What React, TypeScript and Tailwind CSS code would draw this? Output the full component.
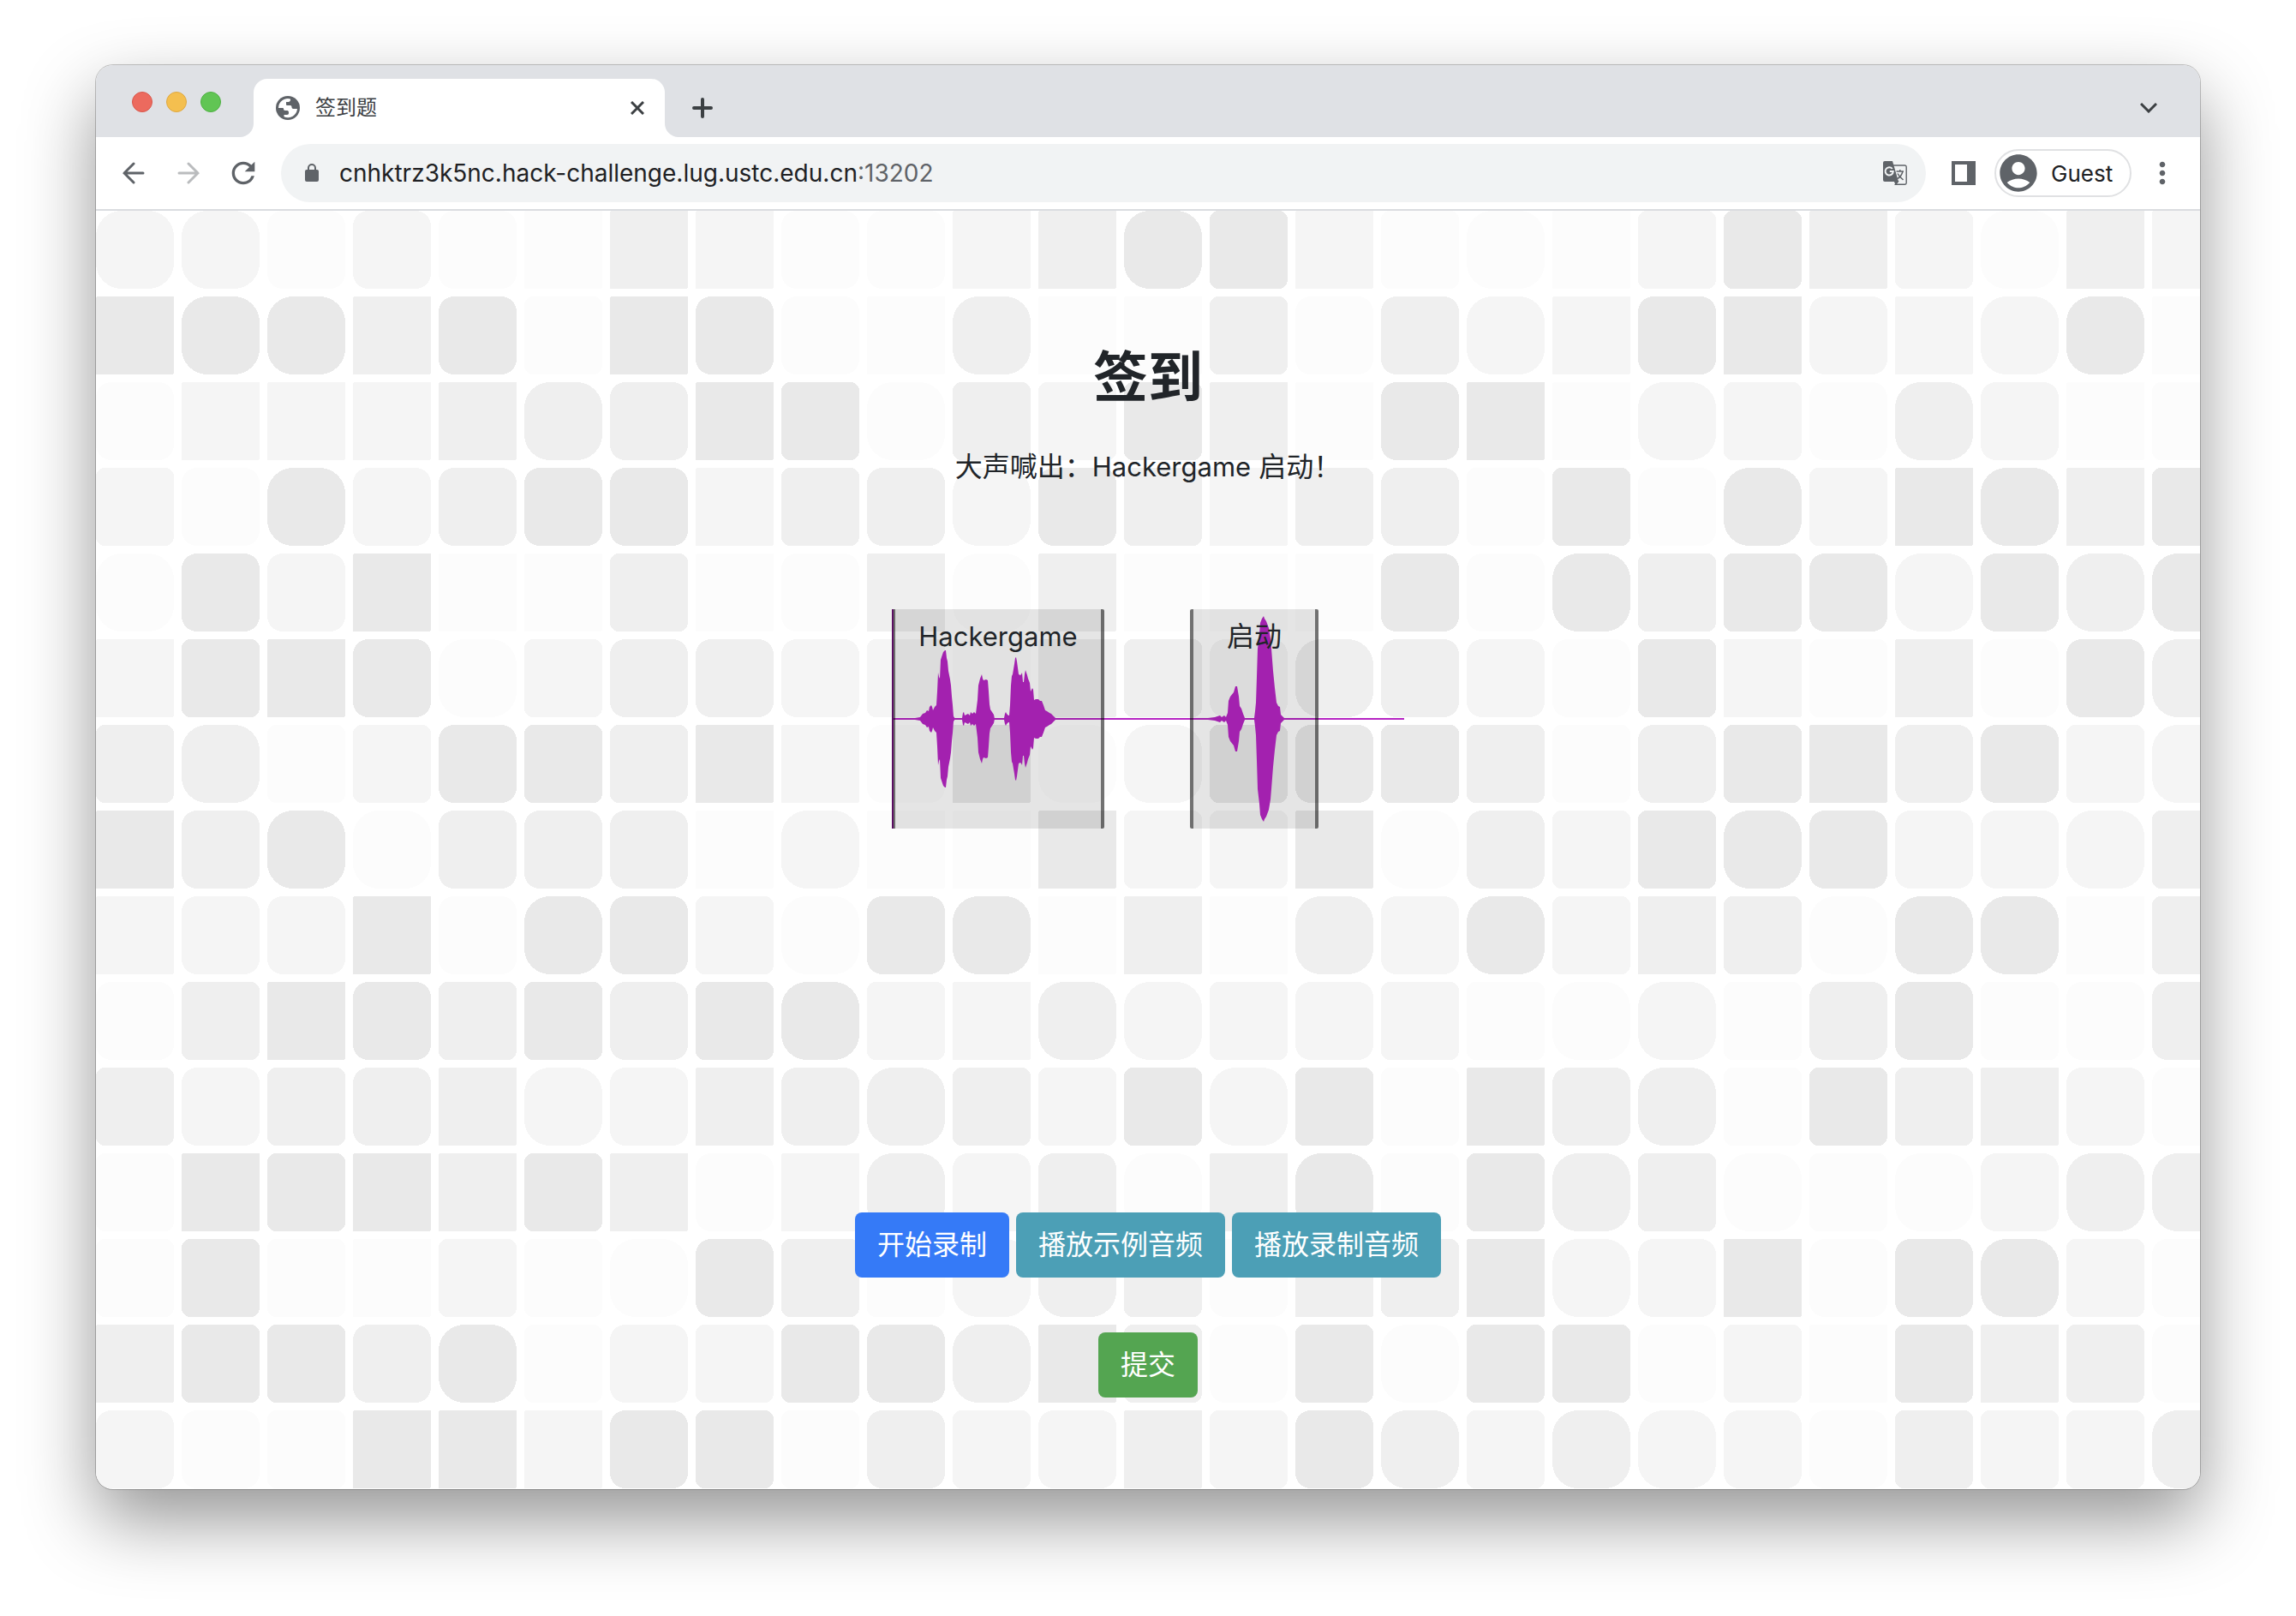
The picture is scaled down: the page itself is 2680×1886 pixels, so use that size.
import { Fragment } from "react";
import { MdAccountCircle, MdMoreVert, MdRefresh } from "react-icons/md";

const TILE_ROWS = [
  "2d 2d 1c 2c 1c 1a 3a 2a 1c 1c 2a 3a 4d 4b 2a 1b 1d 1a 2b 4b 3a 2b 1d 3a 2a",
  "4a 4d 4d 3a 4c 1b 4a 4c 1c 1a 3d 1a 1a 3b 1c 3c 2d 2a 4c 4a 2c 2a 2d 4d 1a",
  "1c 2a 2a 2a 3a 3d 3c 4a 4b 1d 3b 2b 4b 3a 1a 4c 4a 1a 2d 2b 1c 3d 2c 1a 1b",
  "2b 1c 4d 2c 3c 4c 4c 2a 3b 3c 2d 4c 3b 2a 3b 3c 1b 4b 1c 4d 2b 4a 4d 3a 4b",
  "1d 4c 2c 4a 1a 1a 3b 1a 1c 3a 1d 3a 1a 1a 1a 4c 1c 4d 3b 4b 4c 2d 4c 3d 4d",
  "2a 4b 4a 4c 1d 2b 3c 3c 2c 2b 1a 3a 3b 2c 3d 3c 2c 1c 4b 2a 1b 3a 1c 4c 3d",
  "3b 3d 1b 2b 4c 4b 3b 4a 2a 1c 4a 1d 2d 4b 4c 4b 3b 1b 3c 4b 4a 3c 4c 2b 2d",
  "4a 3c 4d 1d 3c 3c 3c 1a 2d 1a 1a 4a 2b 2b 4a 1d 3c 2b 4b 4d 4c 2c 2c 2d 3b",
  "2a 2c 2c 4a 1c 4d 4c 2b 1d 4c 4d 1a 3a 1a 3d 2c 4d 2b 3a 3b 1d 4d 4d 1a 3b",
  "1c 3b 4a 4c 3b 4b 3c 4b 4d 2b 2a 3d 2d 2b 2c 2b 1b 1d 2d 1b 3c 4c 1b 1c 3c",
  "3b 2c 3b 3c 3a 2d 2c 3a 3c 3d 3b 2b 4b 2d 4b 1b 4a 3c 3d 1b 4b 3b 3a 2c 1c",
  "1b 4a 4b 4a 3a 4b 3a 1c 2a 3d 2c 3c 1d 3a 4d 1b 4b 3d 3b 1d 1b 1d 2c 3d 3d",
  "1b 4b 1b 1a 2b 1b 1d 4c 3b 1b 2d 3d 3b 1c 3a 3b 4a 2d 2c 4a 1c 4c 4d 2b 1c",
  "3a 4b 4b 3c 4d 1b 2c 2b 4b 4c 3d 4a 3b 1c 4b 1d 4b 4b 1c 2b 1a 4b 3a 3b 1c",
  "2c 1c 1b 4a 4a 2a 4c 4b 1b 3c 2b 2c 3a 2b 4c 3d 2b 3d 2d 2c 1c 3b 2b 2b 3d",
];

const TILE_FILL: Record<string, string> = { "1": "#fcfcfc", "2": "#f5f5f5", "3": "#efefef", "4": "#e9e9e9" };
const TILE_RADIUS: Record<string, number> = { a: 2, b: 10, c: 18, d: 30 };

function TileBackdrop() {
  return (
    <svg className="absolute inset-0 h-full w-full" aria-hidden="true" shapeRendering="crispEdges">
      {TILE_ROWS.map((row, y) => (
        <Fragment key={y}>
          {row.split(" ").map((tile, x) => (
            <rect
              key={x}
              x={x * 100}
              y={y * 100}
              width={91}
              height={91}
              rx={TILE_RADIUS[tile[1]]}
              fill={TILE_FILL[tile[0]]}
            />
          ))}
        </Fragment>
      ))}
    </svg>
  );
}

/* Envelope of each burst: x position and amplitude, mirrored round the axis. */
const BURSTS: [number, number][][] = [
  [
    [28, 1], [34, 2], [37, 6], [40, 7], [42, 10], [44, 9], [45, 14], [47, 16], [48, 14], [49, 10], [51, 14], [53, 16],
    [54, 32], [55, 54], [56, 49], [57, 47], [58, 69], [59, 72], [61, 78], [63, 80], [64, 80], [65, 71], [66, 67],
    [67, 56], [69, 46], [70, 39], [71, 26], [72, 16], [73, 3], [75, 0],
  ],
  [
    [83, 1], [84, 7], [85, 8], [86, 4], [88, 5], [90, 6], [92, 4], [93, 8], [95, 6], [97, 8], [98, 7], [99, 6],
    [100, 14], [101, 22], [102, 39], [104, 47], [106, 52], [107, 47], [108, 45], [111, 46], [113, 45], [114, 32],
    [115, 17], [116, 11], [118, 8], [120, 5], [121, 0],
  ],
  [
    [132, 1], [133, 6], [134, 8], [135, 6], [137, 4], [138, 4], [139, 16], [140, 39], [141, 50], [142, 52], [144, 64],
    [145, 71], [146, 72], [147, 67], [149, 52], [151, 51], [152, 52], [153, 54], [154, 43], [155, 43], [156, 52],
    [157, 57], [159, 51], [160, 47], [162, 42], [163, 32], [165, 36], [166, 34], [167, 22], [169, 23], [172, 23],
    [174, 21], [176, 21], [178, 16], [180, 10], [182, 9], [185, 7], [187, 6], [190, 3], [192, 1], [194, 0],
  ],
  [
    [370, 1], [378, 2], [384, 4], [386, 2], [389, 4], [391, 2], [393, 7], [394, 21], [396, 26], [400, 31], [402, 38],
    [404, 38], [406, 26], [407, 15], [409, 12], [411, 6], [413, 1],
  ],
  [
    [424, 1], [425, 9], [426, 19], [427, 49], [428, 82], [430, 99], [431, 112], [433, 117], [435, 120], [436, 117],
    [438, 114], [441, 106], [443, 94], [444, 82], [446, 56], [448, 36], [450, 19], [452, 15], [454, 14], [455, 5],
    [458, 2], [460, 0],
  ],
];

function burstPath(points: [number, number][]) {
  const top = points.map(([x, a]) => `${x},${128 - a}`);
  const bottom = [...points].reverse().map(([x, a]) => `${x},${128 + a}`);
  return `M${[...top, ...bottom].join("L")}Z`;
}

function Region({ label, className }: { label: string; className: string }) {
  return (
    <div
      className={`absolute inset-y-0 rounded-xs border-x-4 border-black/50 bg-black/10 pt-2 text-center leading-[48px] ${className}`}
    >
      {label}
    </div>
  );
}

function Waveform() {
  return (
    <div className="relative mt-[142px] h-64 w-[598px]">
      <svg className="block h-64 w-[598px]" viewBox="1 0 598 256" role="img" aria-label="Waveform">
        <path d="M0 127H600V129H0Z" fill="#b625c3" />
        {BURSTS.map((points, i) => (
          <path key={i} d={burstPath(points)} fill="#b625c3" />
        ))}
      </svg>
      <Region label="Hackergame" className="left-0 w-[248px] text-[31px]" />
      <Region label="启动" className="left-[348px] w-[150px] text-[32px]" />
      <div className="absolute inset-y-0 left-0 w-0.5 bg-[#5c0f63]" />
    </div>
  );
}

function ActionButton({ label, className }: { label: string; className: string }) {
  return (
    <button type="button" className={`rounded-lg px-[26px] py-3.5 text-[32px] leading-[48px] text-white ${className}`}>
      {label}
    </button>
  );
}

function TabFlare({ className }: { className: string }) {
  return (
    <svg className={`absolute bottom-0 size-4 text-white ${className}`} viewBox="0 0 16 16" aria-hidden="true">
      <path d="M16 0V16H0A16 16 0 0 0 16 0Z" fill="currentColor" />
    </svg>
  );
}

function GlobeIcon() {
  return (
    <svg viewBox="0 0 28 28" className="size-7" aria-hidden="true">
      <circle cx="14" cy="14" r="14" fill="#5f6368" />
      <path
        d="M3 14A11 11 0 0 1 17 3.4V4.5C17 6 16 7 14.5 7H12V10C12 11 13 11 14 11H17C18 11 18.5 12 18.5 13C18.5 14.5 19.5 15 21 15H25A11 11 0 0 1 9.5 24.2V22H13C14.5 22 15 21 15 20V19C15 17.5 14 17 12.5 17H11C9.5 17 9 16 9 15C9 14.3 8.5 14 8 14Z"
        fill="#fff"
      />
    </svg>
  );
}

function LockIcon() {
  return (
    <svg viewBox="0 0 16 22" className="h-[22px] w-4" aria-hidden="true">
      <rect y="7" width="16" height="14" rx="2" fill="#5f6368" />
      <path d="M4 8V5A4 4 0 0 1 12 5V8" fill="none" stroke="#5f6368" strokeWidth="2" />
    </svg>
  );
}

function TranslateIcon() {
  return (
    <svg viewBox="0 0 28 28" className="size-7" aria-hidden="true">
      <path d="M12 5H25.5A1.8 1.8 0 0 1 27.2 6.8V25.5A1.8 1.8 0 0 1 25.5 27.2H14.5L18 23" fill="none" stroke="#5f6368" strokeWidth="1.4" />
      <path d="M2 0H11L18 24H2A2 2 0 0 1 0 22V2A2 2 0 0 1 2 0Z" fill="#5f6368" />
      <path d="M13 24H18L14.5 28Z" fill="#5f6368" />
      <path d="M10.8 9A4.6 4.6 0 1 0 11.8 12H7.8" fill="none" stroke="#f1f3f4" strokeWidth="2" />
      <path d="M15.5 12H24M19.8 10V12M23 12C22 16 19.5 19 16.8 20.5M17 14.5C18.5 17.5 21 19.5 23.5 22" fill="none" stroke="#5f6368" strokeWidth="1.5" />
    </svg>
  );
}

function TabStrip() {
  return (
    <header className="flex h-21 items-end bg-[#dfe1e5]">
      <div className="flex w-46 gap-4 self-start pt-[31px] pl-[42px]">
        <button type="button" aria-label="Close window" className="size-6 rounded-full border border-[#d9574c] bg-[#ec6a5e]" />
        <button type="button" aria-label="Minimize window" className="size-6 rounded-full border border-[#dfa840] bg-[#f4bf4f]" />
        <button type="button" aria-label="Zoom window" className="size-6 rounded-full border border-[#4fb043] bg-[#61c554]" />
      </div>
      <div className="relative flex h-[68px] w-120 items-center rounded-t-2xl bg-white pr-5 pl-[26px]">
        <TabFlare className="-left-4" />
        <TabFlare className="-right-4 -scale-x-100" />
        <GlobeIcon />
        <span className="ml-[18px] flex-1 text-2xl text-[#3c4043]">签到题</span>
        <button type="button" aria-label="Close tab" className="flex size-6 items-center justify-center text-[#3c4043]">
          <svg viewBox="0 0 16 16" className="size-4" fill="none" stroke="currentColor" strokeWidth="3">
            <path d="M1 1L15 15M15 1L1 15" />
          </svg>
        </button>
      </div>
      <button type="button" aria-label="New tab" className="ml-6 flex h-[68px] w-10 items-center justify-center text-[#3c4043]">
        <svg viewBox="0 0 24 24" className="size-6" fill="none" stroke="currentColor" strokeWidth="4" strokeLinecap="round">
          <path d="M12 2V22M2 12H22" />
        </svg>
      </button>
      <button type="button" aria-label="Search tabs" className="mr-10 ml-auto flex h-[68px] w-10 items-center justify-center text-[#3c4043]">
        <svg viewBox="0 0 20 12" className="h-3 w-5" fill="none" stroke="currentColor" strokeWidth="3">
          <path d="M1 1L10 10L19 1" />
        </svg>
      </button>
    </header>
  );
}

function Toolbar() {
  return (
    <nav className="flex h-[86px] items-center border-b-2 border-[#dadce0] bg-white pr-6 pl-7">
      <button type="button" aria-label="Back" className="flex size-8 items-center justify-center text-[#5f6368]">
        <svg viewBox="0 0 26 26" className="size-[26px]" fill="none" stroke="currentColor" strokeWidth="3" strokeLinecap="round">
          <path d="M24 13H2M13 2L2 13L13 24" />
        </svg>
      </button>
      <button type="button" aria-label="Forward" className="ml-8 flex size-8 items-center justify-center text-[#babcbe]">
        <svg viewBox="0 0 26 26" className="size-[26px]" fill="none" stroke="currentColor" strokeWidth="3" strokeLinecap="round">
          <path d="M2 13H24M13 2L24 13L13 24" />
        </svg>
      </button>
      <button type="button" aria-label="Reload" className="ml-7 text-[#5f6368]">
        <MdRefresh className="size-10" />
      </button>
      <div className="ml-6 flex h-17 flex-1 items-center rounded-full bg-[#f1f3f4] pr-[22px] pl-7 text-[28px]">
        <LockIcon />
        <input
          aria-label="Address"
          className="ml-6 bg-transparent text-[#202124] outline-none [field-sizing:content]"
          defaultValue="cnhktrz3k5nc.hack-challenge.lug.ustc.edu.cn"
        />
        <span className="text-[#5f6368]">:13202</span>
        <button type="button" aria-label="Translate this page" className="ml-auto">
          <TranslateIcon />
        </button>
      </div>
      <button type="button" aria-label="Side panel" className="ml-[30px] text-[#5f6368]">
        <svg viewBox="0 0 28 28" className="size-7">
          <path d="M0 0H28V28H0ZM4 4V24H18V4Z" fill="currentColor" fillRule="evenodd" />
        </svg>
      </button>
      <button type="button" className="ml-[22px] flex h-14 w-40 items-center rounded-full border-2 border-[#e0e1e3] text-[26px] text-[#202124]">
        <MdAccountCircle className="size-13 text-[#5f6368]" />
        <span className="ml-3">Guest</span>
      </button>
      <button type="button" aria-label="Menu" className="ml-4 text-[#5f6368]">
        <MdMoreVert className="size-10" />
      </button>
    </nav>
  );
}

export default function App() {
  return (
    <div className="flex min-h-screen bg-white px-28 pt-19 pb-37 font-['Inter','Noto_Sans_CJK_SC',sans-serif]">
      <div className="flex min-w-0 flex-1 flex-col overflow-hidden rounded-[20px] bg-white shadow-[0_0_0_1px_rgba(0,0,0,0.22),0_36px_84px_rgba(0,0,0,0.42)]">
        <TabStrip />
        <Toolbar />
        <main className="relative flex-1 text-[#212529]">
          <TileBackdrop />
          <div className="relative flex flex-col items-center pt-39">
            <h1 className="text-[64px] leading-[76px] font-bold">签到</h1>
            <p className="mt-[43px] text-[32px] leading-[48px]">
              大声喊出：<span className="text-[31px]">Hackergame</span> 启动！
            </p>
            <Waveform />
            <div className="mt-112 flex gap-2">
              <ActionButton label="开始录制" className="bg-[#357af7]" />
              <ActionButton label="播放示例音频" className="bg-[#4c9fb6]" />
              <ActionButton label="播放录制音频" className="bg-[#4c9fb6]" />
            </div>
            <div className="mt-16">
              <ActionButton label="提交" className="bg-[#54a551]" />
            </div>
          </div>
        </main>
      </div>
    </div>
  );
}
